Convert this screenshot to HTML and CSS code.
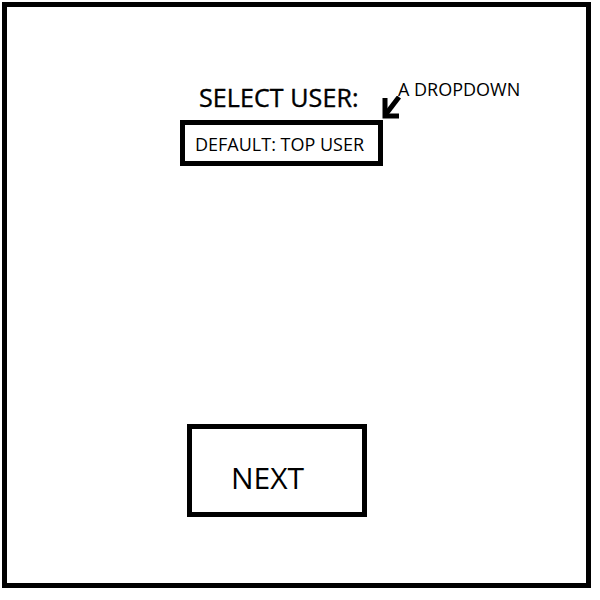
FILE: index.html
```html
<!DOCTYPE html>
<html lang="en">
<head>
  <meta charset="UTF-8">
  <title>Select User</title>
  <link rel="stylesheet" href="styles.css">
</head>
<body>
  <div class="frame">
    <div class="picker">
      <div class="picker-main">
        <div class="picker-title">SELECT USER:</div>
        <div class="picker-box">DEFAULT: TOP USER</div>
      </div>
      <div class="note">
        <div class="note-text">A DROPDOWN</div>
        <svg class="note-arrow" width="20" height="24" viewBox="0 0 20 24">
          <path d="M18 1 L5 18" stroke="#000" stroke-width="5" fill="none"/>
          <path d="M4 2 V20 H18" stroke="#000" stroke-width="5" fill="none"/>
        </svg>
      </div>
    </div>

    <button class="next-btn">NEXT</button>
  </div>
</body>
</html>
```

FILE: styles.css
```css
body {
  margin: 0;
  background: #fff;
  color: #000;
  font-family: 'Open Sans', 'Liberation Sans', sans-serif;
}
.frame {
  box-sizing: border-box;
  width: 589px;
  height: 586px;
  margin: 2px;
  border: 5px solid #000;
  display: flex;
  flex-direction: column;
  align-items: flex-start;
}
.picker {
  display: flex;
  margin: 73px 0 0 173px;
}
.picker-main {
  display: flex;
  flex-direction: column;
}
.picker-title {
  margin: 5px 0 0 19px;
  font-size: 25px;
  font-weight: 500;
  line-height: 1;
  letter-spacing: 0.1px;
  -webkit-text-stroke: 0.4px #000;
}
.picker-box {
  box-sizing: border-box;
  width: 203px;
  margin-top: 10px;
  padding: 10px 10px 8px;
  border: 5px solid #000;
  font-size: 18px;
  line-height: 1;
  white-space: nowrap;
}
.note {
  display: flex;
  flex-direction: column;
  margin-left: -2px;
}
.note-text {
  margin-left: 17px;
  font-size: 18px;
  line-height: 1;
  white-space: nowrap;
}
.note-arrow {
  margin-top: -2px;
}
.next-btn {
  box-sizing: border-box;
  width: 180px;
  height: 93px;
  margin: 258px 0 0 180px;
  padding: 34px 0 19px 39px;
  border: 5px solid #000;
  background: #fff;
  color: #000;
  font-family: inherit;
  font-size: 30px;
  line-height: 1;
  text-align: left;
}
```
